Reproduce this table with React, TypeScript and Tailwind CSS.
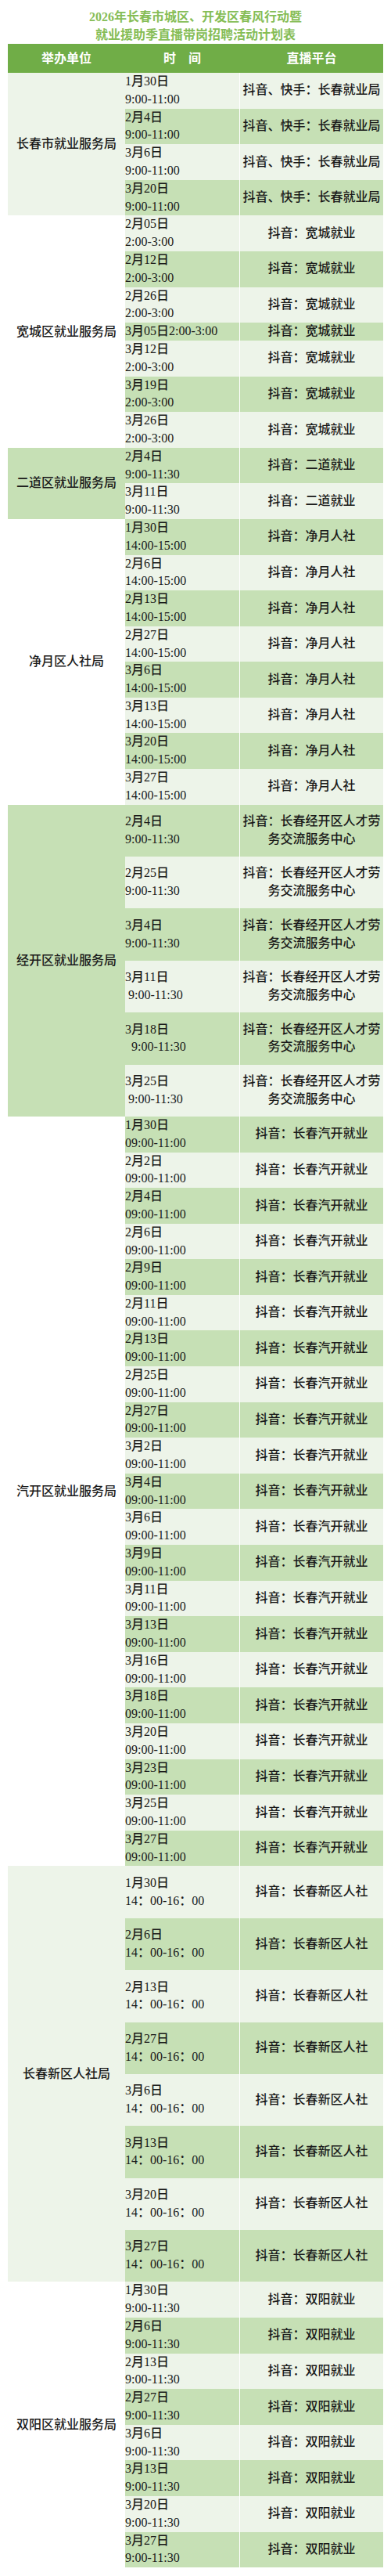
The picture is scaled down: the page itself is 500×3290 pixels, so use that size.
type Row = { date: string; time?: string; platform: string }
type Group = { name: string; bg: string; tall?: boolean; rows: Row[] }

const LIGHT = 'bg-[#edf4e9]'
const DARK = 'bg-[#c6e0b5]'
const WHITE = 'bg-white'

const make = (dates: string[], time: string, platform: string): Row[] =>
  dates.map((date) => ({ date, time, platform }))

const jk = '抖音：长春经开区人才劳务交流服务中心'

const groups: Group[] = [
  {
    name: '长春市就业服务局',
    bg: LIGHT,
    rows: make(['1月30日', '2月4日', '3月6日', '3月20日'], '9:00-11:00', '抖音、快手：长春就业局'),
  },
  {
    name: '宽城区就业服务局',
    bg: WHITE,
    rows: [
      ...make(['2月05日', '2月12日', '2月26日'], '2:00-3:00', '抖音：宽城就业'),
      { date: '3月05日2:00-3:00', platform: '抖音：宽城就业' },
      ...make(['3月12日', '3月19日', '3月26日'], '2:00-3:00', '抖音：宽城就业'),
    ],
  },
  {
    name: '二道区就业服务局',
    bg: DARK,
    rows: make(['2月4日', '3月11日'], '9:00-11:30', '抖音：二道就业'),
  },
  {
    name: '净月区人社局',
    bg: WHITE,
    rows: make(
      ['1月30日', '2月6日', '2月13日', '2月27日', '3月6日', '3月13日', '3月20日', '3月27日'],
      '14:00-15:00',
      '抖音：净月人社',
    ),
  },
  {
    name: '经开区就业服务局',
    bg: DARK,
    tall: true,
    rows: [
      { date: '2月4日', time: '9:00-11:30', platform: jk },
      { date: '2月25日', time: '9:00-11:30', platform: jk },
      { date: '3月4日', time: '9:00-11:30', platform: jk },
      { date: '3月11日', time: ' 9:00-11:30', platform: jk },
      { date: '3月18日', time: '  9:00-11:30', platform: jk },
      { date: '3月25日', time: ' 9:00-11:30', platform: jk },
    ],
  },
  {
    name: '汽开区就业服务局',
    bg: WHITE,
    rows: make(
      [
        '1月30日', '2月2日', '2月4日', '2月6日', '2月9日', '2月11日', '2月13日',
        '2月25日', '2月27日', '3月2日', '3月4日', '3月6日', '3月9日', '3月11日',
        '3月13日', '3月16日', '3月18日', '3月20日', '3月23日', '3月25日', '3月27日',
      ],
      '09:00-11:00',
      '抖音：长春汽开就业',
    ),
  },
  {
    name: '长春新区人社局',
    bg: LIGHT,
    tall: true,
    rows: make(
      ['1月30日', '2月6日', '2月13日', '2月27日', '3月6日', '3月13日', '3月20日', '3月27日'],
      '14：00-16：00',
      '抖音：长春新区人社',
    ),
  },
  {
    name: '双阳区就业服务局',
    bg: WHITE,
    rows: make(
      ['1月30日', '2月6日', '2月13日', '2月27日', '3月6日', '3月13日', '3月20日', '3月27日'],
      '9:00-11:30',
      '抖音：双阳就业',
    ),
  },
]

export default function App() {
  let idx = 0

  return (
    <div
      className="w-[500px] bg-white pb-[10px] text-[16px] font-medium text-[#1a1a1a]"
      style={{ fontFamily: '"Liberation Serif", "Noto Sans CJK SC", serif' }}
    >
      <div className="mx-[10px]">
        {/* Title */}
        <div className="pt-[10px] text-center text-[16px] font-bold leading-[23px] text-[#86bd56]">
          <div>2026年长春市城区、开发区春风行动暨</div>
          <div>就业援助季直播带岗招聘活动计划表</div>
        </div>

        {/* Header */}
        <div className="flex h-[37px] bg-[#70ad47] text-[16px] font-bold text-white">
          <div className="flex w-[150px] items-center justify-center">举办单位</div>
          <div className="flex w-[146px] items-center justify-center">时　间</div>
          <div className="ml-px flex flex-1 items-center justify-center">直播平台</div>
        </div>

        {/* Body */}
        {groups.map((g) => (
          <div key={g.name} className="flex">
            <div className={`flex w-[150px] items-center justify-center ${g.bg}`}>{g.name}</div>
            <div className="flex flex-1 flex-col">
              {g.rows.map((r, i) => {
                const bg = idx++ % 2 === 0 ? LIGHT : DARK
                return (
                  <div key={i} className="flex gap-px bg-white leading-[22.8px]">
                    <div
                      className={`w-[146px] whitespace-pre ${bg} ${g.tall ? 'py-[10.4px]' : ''}`}
                    >
                      <div>{r.date}</div>
                      {r.time && <div>{r.time}</div>}
                    </div>
                    <div className={`flex flex-1 items-center justify-center px-[3px] text-center ${bg}`}>
                      {r.platform}
                    </div>
                  </div>
                )
              })}
            </div>
          </div>
        ))}
      </div>
    </div>
  )
}
